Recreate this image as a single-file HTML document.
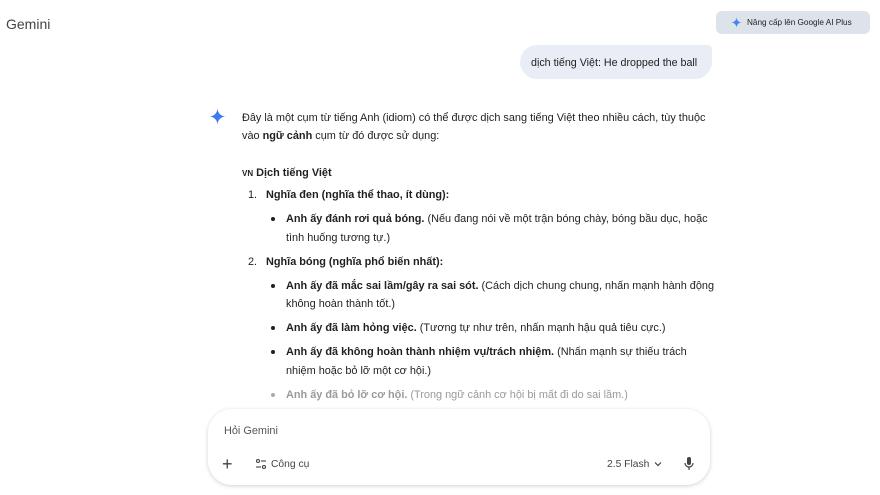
<!DOCTYPE html>
<html><head><meta charset="utf-8"><style>
body{margin:0;width:880px;height:495px;background:#fff;font-family:"Liberation Sans",sans-serif;color:#1f1f1f;position:relative;overflow:hidden}
.a{position:absolute;white-space:nowrap;font-size:10.9px;line-height:14px}
b{font-weight:bold}
.dot{position:absolute;width:4px;height:4px;border-radius:50%;background:#1f1f1f}
</style></head><body>
<div class="a" style="left:6px;top:15px;font-size:14px;line-height:18px;color:#444">Gemini</div>
<div style="position:absolute;left:716px;top:11px;width:154px;height:23px;background:#dde3ea;border-radius:6px"></div>
<svg style="position:absolute;left:731px;top:17px" width="11" height="11" viewBox="0 0 24 24"><defs><linearGradient id="g1" x1="0" y1="0" x2="1" y2="1"><stop offset="0" stop-color="#4285f4"/><stop offset=".6" stop-color="#4285f4"/><stop offset="1" stop-color="#ea8335"/></linearGradient></defs><path d="M12 0C12 7 17 12 24 12C17 12 12 17 12 24C12 17 7 12 0 12C7 12 12 7 12 0Z" fill="url(#g1)"/></svg>
<div class="a" style="left:747px;top:17px;font-size:8.2px;line-height:12px">Nâng cấp lên Google AI Plus</div>
<div style="position:absolute;left:520px;top:45px;width:192px;height:34px;background:#e9eef6;border-radius:17px 4px 17px 17px"></div>
<div class="a" style="left:531px;top:56px;font-size:10.7px">dịch tiếng Việt: He dropped the ball</div>
<svg style="position:absolute;left:209px;top:108px" width="17" height="17" viewBox="0 0 24 24"><path d="M12 0C12 7 17 12 24 12C17 12 12 17 12 24C12 17 7 12 0 12C7 12 12 7 12 0Z" fill="#3c7cf0"/></svg>
<div class="a" style="left:242px;top:111px">Đây là một cụm từ tiếng Anh (idiom) có thể được dịch sang tiếng Việt theo nhiều cách, tùy thuộc</div>
<div class="a" style="left:242px;top:129px">vào <b>ngữ cảnh</b> cụm từ đó được sử dụng:</div>
<div class="a" style="left:242px;top:166px"><b><span style="font-size:8px">VN</span> Dịch tiếng Việt</b></div>
<div class="a" style="left:248px;top:188px">1.</div>
<div class="a" style="left:266px;top:188px"><b>Nghĩa đen (nghĩa thể thao, ít dùng):</b></div>
<div class="dot" style="left:271px;top:217px"></div>
<div class="a" style="left:286px;top:212px"><b>Anh ấy đánh rơi quả bóng.</b> (Nếu đang nói về một trận bóng chày, bóng bầu dục, hoặc</div>
<div class="a" style="left:286px;top:231px">tình huống tương tự.)</div>
<div class="a" style="left:248px;top:255px">2.</div>
<div class="a" style="left:266px;top:255px"><b>Nghĩa bóng (nghĩa phổ biến nhất):</b></div>
<div class="dot" style="left:271px;top:284px"></div>
<div class="a" style="left:286px;top:279px"><b>Anh ấy đã mắc sai lầm/gây ra sai sót.</b> (Cách dịch chung chung, nhấn mạnh hành động</div>
<div class="a" style="left:286px;top:297px">không hoàn thành tốt.)</div>
<div class="dot" style="left:271px;top:326px"></div>
<div class="a" style="left:286px;top:321px"><b>Anh ấy đã làm hỏng việc.</b> (Tương tự như trên, nhấn mạnh hậu quả tiêu cực.)</div>
<div class="dot" style="left:271px;top:350px"></div>
<div class="a" style="left:286px;top:345px"><b>Anh ấy đã không hoàn thành nhiệm vụ/trách nhiệm.</b> (Nhấn mạnh sự thiếu trách</div>
<div class="a" style="left:286px;top:364px">nhiệm hoặc bỏ lỡ một cơ hội.)</div>
<div class="dot" style="left:271px;top:393px;background:#aaa"></div>
<div class="a" style="left:286px;top:388px;color:#9a9a9a"><b>Anh ấy đã bỏ lỡ cơ hội.</b> (Trong ngữ cảnh cơ hội bị mất đi do sai lầm.)</div>
<div style="position:absolute;left:208px;top:409px;width:502px;height:76px;background:#fff;border-radius:24px;box-shadow:0 1px 4px rgba(0,0,0,.18)"></div>
<div class="a" style="left:224px;top:424px;color:#555">Hỏi Gemini</div>
<div class="a" style="left:222px;top:455px;font-size:18px;line-height:18px;color:#444">+</div>
<svg style="position:absolute;left:255px;top:458px" width="12" height="12" viewBox="0 0 12 12" fill="none" stroke="#444" stroke-width="1.1"><circle cx="3" cy="3" r="1.5"/><line x1="6" y1="3" x2="11" y2="3"/><circle cx="9" cy="9" r="1.5"/><line x1="1" y1="9" x2="6" y2="9"/></svg>
<div class="a" style="left:271px;top:458px;font-size:10.3px;color:#444">Công cụ</div>
<div class="a" style="left:607px;top:458px;font-size:10.3px;color:#444">2.5 Flash</div>
<svg style="position:absolute;left:654px;top:461px" width="8" height="6" viewBox="0 0 8 6"><path d="M1 1.5L4 4.5L7 1.5" stroke="#444" stroke-width="1.2" fill="none"/></svg>
<svg style="position:absolute;left:684px;top:457px" width="10" height="13" viewBox="0 0 10 13"><rect x="3" y="0" width="4" height="8" rx="2" fill="#444"/><path d="M1 6a4 4 0 0 0 8 0" stroke="#444" stroke-width="1.2" fill="none"/><line x1="5" y1="10" x2="5" y2="13" stroke="#444" stroke-width="1.2"/></svg>
</body></html>
